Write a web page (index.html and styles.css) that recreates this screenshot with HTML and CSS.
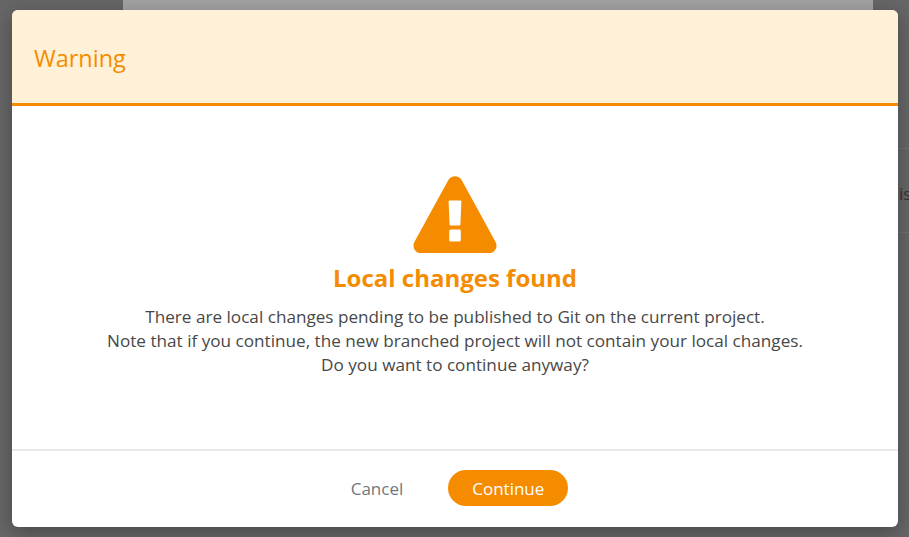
FILE: index.html
```html
<!DOCTYPE html>
<html lang="en">
<head>
<meta charset="utf-8">
<title>Warning</title>
<link rel="stylesheet" href="styles.css">
</head>
<body>
<div class="backdrop">
  <div class="under-card"></div>
  <div class="under-row under-row-a"></div>
  <div class="under-row under-row-b"><span class="under-text">is</span></div>
</div>
<div class="modal" role="dialog">
  <header class="modal-header">Warning</header>
  <main class="modal-body">
    <svg class="warn-icon" viewBox="0 0 84 78" width="84" height="78" aria-hidden="true">
      <path fill="#f58c00" fill-rule="evenodd" d="M35.2 4.2 C38.2 -1 45.8 -1 48.8 4.2 L82.6 66 C85.2 71 82 77 76.2 77 L7.8 77 C2 77 -1.2 71 1.4 66 Z M35.6 25.5 L36.6 48.5 Q36.7 49.5 37.7 49.5 L46.3 49.5 Q47.3 49.5 47.4 48.5 L48.4 25.5 Q48.4 24.5 47.4 24.5 L36.6 24.5 Q35.6 24.5 35.6 25.5 Z M37.6 53.5 Q36.2 53.5 36.2 55 L36.2 64 Q36.2 65.5 37.6 65.5 L46.4 65.5 Q47.8 65.5 47.8 64 L47.8 55 Q47.8 53.5 46.4 53.5 Z"/>
    </svg>
    <h1 class="modal-title">Local changes found</h1>
    <p class="modal-text">There are local changes pending to be published to Git on the current project.<br>Note that if you continue, the new branched project will not contain your local changes.<br>Do you want to continue anyway?</p>
  </main>
  <footer class="modal-footer">
    <button class="btn btn-cancel" type="button">Cancel</button>
    <button class="btn btn-continue" type="button">Continue</button>
  </footer>
</div>
</body>
</html>
```
FILE: styles.css
```css
* { box-sizing: border-box; }
html, body { margin: 0; height: 100%; }
body {
  position: relative;
  width: 909px;
  height: 537px;
  overflow: hidden;
  font-family: "Open Sans", "Noto Sans", sans-serif;
  background: #5c5c5c;
}
.backdrop {
  position: absolute;
  inset: 0;
  background: #666;
}
.under-card {
  position: absolute;
  left: 123px;
  top: 0;
  width: 750px;
  height: 10px;
  background: #a3a3a3;
}
.under-row {
  position: absolute;
  left: 898px;
  width: 11px;
  border-bottom: 1px solid #707070;
}
.under-row-a { top: 0; height: 149px; }
.under-row-b { top: 149px; height: 84px; }
.under-text {
  position: absolute;
  left: 1px;
  top: 33px;
  font-size: 17px;
  color: #333;
}
.modal {
  position: absolute;
  left: 12px;
  top: 10px;
  width: 886px;
  height: 517px;
  display: flex;
  flex-direction: column;
  background: #fff;
  border-radius: 6px;
  box-shadow: 0 5px 20px rgba(0, 0, 0, 0.3);
  overflow: hidden;
}
.modal-header {
  height: 96px;
  flex: none;
  padding: 32px 22px 0;
  font-size: 23.5px;
  line-height: 33px;
  color: #f58c00;
  background: #fff1d7;
  border-bottom: 3px solid #f58c00;
}
.modal-body {
  flex: 1;
  display: flex;
  flex-direction: column;
  align-items: center;
  padding-top: 70px;
}
.warn-icon { display: block; flex: none; }
.modal-title {
  margin: 8px 0 0;
  font-size: 24px;
  line-height: 32px;
  font-weight: 700;
  color: #f58c00;
}
.modal-text {
  margin: 11px 0 0;
  font-size: 17.15px;
  line-height: 24px;
  text-align: center;
  color: #484848;
}
.modal-footer {
  height: 78px;
  flex: none;
  display: flex;
  justify-content: center;
  align-items: center;
  gap: 45px;
  padding: 0 0 2px 9px;
  border-top: 2px solid #e9e9e9;
}
.btn {
  font: inherit;
  font-size: 17px;
  border: 0;
  cursor: pointer;
}
.btn-cancel {
  background: none;
  color: #6f7780;
  padding: 0;
}
.btn-continue {
  width: 120px;
  height: 36px;
  border-radius: 18px;
  color: #fff;
  background: #f58c00;
  padding: 0;
}
```
